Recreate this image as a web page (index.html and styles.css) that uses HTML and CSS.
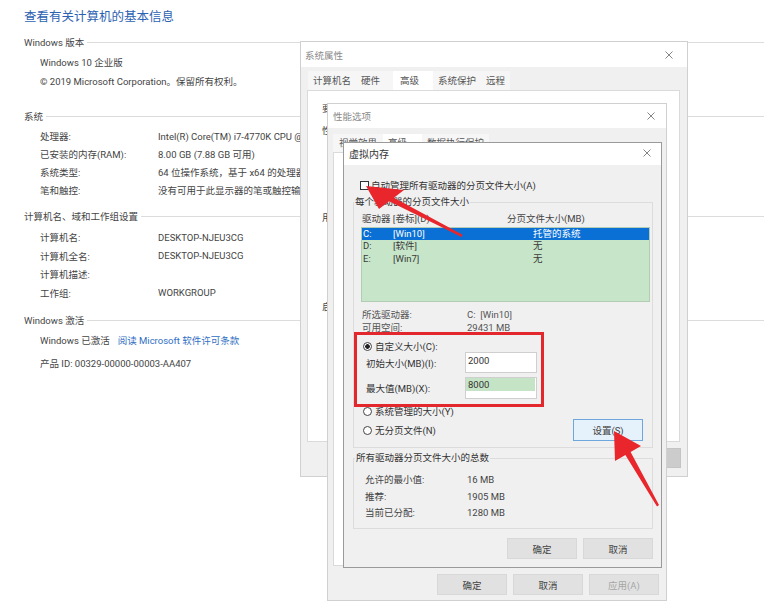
FILE: index.html
```html
<!DOCTYPE html>
<html lang="zh-CN">
<head>
<meta charset="utf-8">
<title>系统</title>
<link rel="stylesheet" href="styles.css">
</head>
<body>
<div class="screen">
  <main class="sysinfo">
    <h1 class="title">查看有关计算机的基本信息</h1>

    <section class="sec sec-ver">
      <div class="sec-head"><span>Windows 版本</span></div>
      <div class="rows">
        <div class="row">Windows 10 企业版</div>
        <div class="row">© 2019 Microsoft Corporation。保留所有权利。</div>
      </div>
    </section>

    <section class="sec sec-sys">
      <div class="sec-head"><span>系统</span></div>
      <div class="rows">
        <div class="row"><span>处理器:</span><span>Intel(R) Core(TM) i7-4770K CPU @ 3.50GHz</span></div>
        <div class="row"><span>已安装的内存(RAM):</span><span>8.00 GB (7.88 GB 可用)</span></div>
        <div class="row"><span>系统类型:</span><span>64 位操作系统，基于 x64 的处理器</span></div>
        <div class="row"><span>笔和触控:</span><span>没有可用于此显示器的笔或触控输入</span></div>
      </div>
    </section>

    <section class="sec sec-comp">
      <div class="sec-head"><span>计算机名、域和工作组设置</span></div>
      <div class="rows">
        <div class="row"><span>计算机名:</span><span>DESKTOP-NJEU3CG</span></div>
        <div class="row"><span>计算机全名:</span><span>DESKTOP-NJEU3CG</span></div>
        <div class="row"><span>计算机描述:</span><span></span></div>
        <div class="row"><span>工作组:</span><span>WORKGROUP</span></div>
      </div>
    </section>

    <section class="sec sec-act">
      <div class="sec-head"><span>Windows 激活</span></div>
      <div class="rows">
        <div class="row row-flow">Windows 已激活<a class="link">阅读 Microsoft 软件许可条款</a></div>
        <div class="row row-flow row-pid">产品 ID: 00329-00000-00003-AA407</div>
      </div>
    </section>
  </main>

  <!-- 系统属性 -->
  <div class="dlg dlg-sys">
    <div class="tbar tbar-sys">
      <span class="tbar-title muted">系统属性</span>
      <svg class="x" viewBox="0 0 8 8"><path d="M0.5 0.5L7.5 7.5M7.5 0.5L0.5 7.5"/></svg>
    </div>
    <div class="tabs tabs-sys">
      <span class="tab">计算机名</span>
      <span class="tab">硬件</span>
      <span class="tab on">高级</span>
      <span class="tab">系统保护</span>
      <span class="tab">远程</span>
    </div>
    <div class="panel panel-sys">
      <div class="pline pl1">要进行大多数更改，你必须作为管理员登录。</div>
      <div class="pline pl2">性能</div>
      <div class="pline pl3">用户配置文件</div>
      <div class="pline pl4">启动和故障恢复</div>
    </div>
    <div class="btnrow btnrow-sys">
      <span class="btn">确定</span>
      <span class="btn">取消</span>
      <span class="btn btn-dark">应用(A)</span>
    </div>
  </div>

  <!-- 性能选项 -->
  <div class="dlg dlg-perf">
    <div class="tbar tbar-perf">
      <span class="tbar-title muted">性能选项</span>
      <svg class="x" viewBox="0 0 8 8"><path d="M0.5 0.5L7.5 7.5M7.5 0.5L0.5 7.5"/></svg>
    </div>
    <div class="tabs tabs-perf">
      <span class="tab">视觉效果</span>
      <span class="tab on">高级</span>
      <span class="tab">数据执行保护</span>
    </div>
    <div class="panel panel-perf"></div>
    <div class="btnrow btnrow-perf">
      <span class="btn">确定</span>
      <span class="btn">取消</span>
      <span class="btn btn-off">应用(A)</span>
    </div>
  </div>

  <!-- 虚拟内存 -->
  <div class="dlg dlg-vm">
    <div class="tbar tbar-vm">
      <span class="tbar-title">虚拟内存</span>
      <svg class="x" viewBox="0 0 8 8"><path d="M0.5 0.5L7.5 7.5M7.5 0.5L0.5 7.5"/></svg>
    </div>
    <div class="vm-body">
      <div class="check-row"><span class="checkbox"></span><span class="check-label">自动管理所有驱动器的分页文件大小(A)</span></div>

      <fieldset class="group group-drive">
        <legend>每个驱动器的分页文件大小</legend>
        <div class="colhead"><span>驱动器 [卷标](D)</span><span>分页文件大小(MB)</span></div>
        <div class="listbox">
          <div class="li sel"><span>C:</span><span>[Win10]</span><span>托管的系统</span></div>
          <div class="li"><span>D:</span><span>[软件]</span><span>无</span></div>
          <div class="li"><span>E:</span><span>[Win7]</span><span>无</span></div>
        </div>
        <div class="info">
          <div class="info-row"><span>所选驱动器:</span><span>C:&nbsp; [Win10]</span></div>
          <div class="info-row"><span>可用空间:</span><span>29431 MB</span></div>
        </div>
        <div class="radio-row radio-custom"><span class="radio on"></span><span>自定义大小(C):</span></div>
        <div class="size-row"><span>初始大小(MB)(I):</span><span class="input"><span class="input-text">2000</span></span></div>
        <div class="size-row size-row2"><span>最大值(MB)(X):</span><span class="input"><span class="input-text input-sel">8000</span></span></div>
        <div class="radio-row radio-sys"><span class="radio"></span><span>系统管理的大小(Y)</span></div>
        <div class="radio-row radio-none"><span class="radio"></span><span>无分页文件(N)</span><span class="btn btn-set">设置(S)</span></div>
      </fieldset>

      <fieldset class="group group-total">
        <legend>所有驱动器分页文件大小的总数</legend>
        <div class="total-row"><span>允许的最小值:</span><span>16 MB</span></div>
        <div class="total-row"><span>推荐:</span><span>1905 MB</span></div>
        <div class="total-row"><span>当前已分配:</span><span>1280 MB</span></div>
      </fieldset>

      <div class="btnrow btnrow-vm">
        <span class="btn">确定</span>
        <span class="btn">取消</span>
      </div>
    </div>
  </div>

  <!-- 标注 -->
  <svg class="marks" viewBox="0 0 764 605" width="764" height="605">
    <rect x="355.5" y="333.5" width="187" height="72" fill="none" stroke="#e2282d" stroke-width="3"/>
    <polygon fill="#e8262b" points="366,186 404,190 393.9,197.7 462.6,234.8 461.6,237 389.1,201.3 379,209"/>
    <polygon fill="#e8262b" points="614,431 641,446 630.6,452 659,505 657,506.5 625.4,455 615,461"/>
  </svg>
</div>
</body>
</html>
```

FILE: styles.css
```css
* { box-sizing: border-box; }
html, body { margin: 0; padding: 0; }
body {
  width: 764px;
  height: 605px;
  overflow: hidden;
  background: #fff;
  font-family: Roboto, "Noto Sans CJK SC", sans-serif;
  font-size: 9.5px;
  color: #3c3c3c;
}
.screen { position: relative; width: 764px; height: 605px; overflow: hidden; }

/* ---------- left system info page ---------- */
.sysinfo { padding: 7px 0 0 24px; }
.title {
  margin: 0;
  font-size: 12.5px;
  font-weight: normal;
  line-height: 20px;
  color: #2d62b2;
  white-space: nowrap;
}
.sec-head {
  display: flex;
  align-items: center;
  height: 18px;
  color: #454545;
  white-space: nowrap;
}
.sec-head::after {
  content: "";
  flex: 1;
  border-top: 1px solid #dcdcdc;
  margin-left: 3px;
}
.rows { padding-left: 16px; }
.row {
  display: grid;
  grid-template-columns: 118px auto;
  align-items: center;
  height: 18px;
  white-space: nowrap;
  color: #444;
}
.row-flow { display: flex; }
.link { color: #2f6fc4; margin-left: 8px; }

.sec-ver .sec-head { margin-top: 6px; }
.sec-ver .rows { margin-top: 1.5px; }
.sec-ver .row { height: 19px; }
.sec-sys .sec-head { margin-top: 16.5px; }
.sec-sys .rows { margin-top: 2px; }
.sec-comp .sec-head { margin-top: 8px; }
.sec-comp .rows { margin-top: 3px; }
.sec-comp .row { height: 18.5px; }
.sec-act .sec-head { margin-top: 9px; }
.sec-act .rows { margin-top: 2px; }
.sec-act .row-pid { margin-top: 5px; }

/* ---------- dialogs ---------- */
.dlg {
  position: absolute;
  display: flex;
  flex-direction: column;
  background: #f0f0f0;
  border: 1px solid #d0d0d0;
}
.dlg-sys { left: 300px; top: 41px; width: 388px; height: 436px; }
.dlg-perf { left: 327px; top: 103px; width: 340px; height: 498px; }
.dlg-vm { left: 343px; top: 142px; width: 319px; height: 426px; border-color: #9a9a9a; }

.tbar {
  flex: none;
  display: flex;
  align-items: center;
  justify-content: space-between;
  background: #fff;
  white-space: nowrap;
}
.tbar-sys { height: 25px; padding: 0 14px 0 4px; }
.tbar-perf { height: 24px; padding: 0 11px 0 5px; }
.tbar-vm { height: 22px; padding: 0 10px 2px 5px; color: #333; font-size: 10px; }
.muted { color: #8a8a8a; }
.x { width: 8px; height: 8px; flex: none; }
.x path { stroke: #777; stroke-width: 0.9; fill: none; }

.tabs {
  flex: none;
  display: flex;
  align-self: flex-start;
  background: #f6f6f6;
  white-space: nowrap;
  color: #555;
}
.tab { display: block; }
.tab.on { background: #fff; }
.tabs-sys { margin: 4px 0 0 7px; height: 19px; line-height: 19px; }
.tabs-sys .tab { padding: 0 5px; }
.tabs-sys .tab.on { margin-left: 8px; padding: 0 14px 0 7px; }
.tabs-perf { margin: 6px 0 0 5px; height: 18px; line-height: 18px; }
.tabs-perf .tab { padding: 0 5px; }
.tabs-perf .tab:first-child { padding: 0 6px; }
.tabs-perf .tab.on { padding: 0 15px 0 5px; }

.panel {
  flex: none;
  background: #fff;
  border: 1px solid #dadada;
}
.panel-sys { margin: 0 7px 0 6px; height: 352px; padding-left: 14px; }
.panel-perf { margin: 0 5px; height: 414px; }
.pline { line-height: 13px; white-space: nowrap; color: #444; }
.pl1 { margin-top: 10.5px; }
.pl2 { margin-top: 9px; }
.pl3 { margin-top: 74px; }
.pl4 { margin-top: 76px; }

.btnrow { flex: none; display: flex; justify-content: flex-end; gap: 6px; }
.btn {
  display: flex;
  align-items: center;
  justify-content: center;
  width: 70px;
  background: #e1e1e1;
  border: 1px solid #d8d8d8;
  color: #444;
  white-space: nowrap;
}
.btnrow-sys { margin-top: 6px; padding-right: 6px; }
.btnrow-sys .btn { height: 20px; }
.btn-dark { background: #cccccc; border-color: #c4c4c4; }
.btnrow-perf { margin-top: 8px; padding-right: 7px; }
.btnrow-perf .btn { height: 21px; }
.btn-off { color: #a6a6a6; }

/* ---------- virtual memory ---------- */
.vm-body {
  flex: 1;
  display: flex;
  flex-direction: column;
  padding: 0 8px 0 9px;
  color: #333;
}
.check-row {
  display: flex;
  align-items: center;
  height: 14px;
  margin-top: 13px;
  padding-left: 7px;
  white-space: nowrap;
}
.checkbox {
  width: 9px;
  height: 9px;
  background: #fff;
  border: 1px solid #333;
  flex: none;
}
.check-label { margin-left: 2px; }

.group {
  margin: 3px 0 0 0;
  padding: 0;
  min-width: 0;
  border: 1px solid #dcdcdc;
}
.group legend {
  padding: 0 1px;
  line-height: 14px;
  white-space: nowrap;
  color: #333;
}
.group-drive { padding-bottom: 6px; }
.group-total { padding: 7px 0 6px 0; }
.group-total legend { margin-left: 1px; }

.colhead {
  display: grid;
  grid-template-columns: 145px auto;
  height: 13px;
  line-height: 13px;
  margin-top: 2.5px;
  padding-left: 8px;
  white-space: nowrap;
  color: #444;
}
.listbox {
  margin: 2.5px 2px 0 7px;
  height: 75px;
  background: #c7e6c9;
  border: 1px solid #b2cdb4;
}
.li {
  display: grid;
  grid-template-columns: 30px 140px auto;
  height: 12.5px;
  line-height: 12.5px;
  padding-left: 1px;
  white-space: nowrap;
  color: #3a3a3a;
}
.li.sel { height: 12px; line-height: 12px; background: #0a70d6; color: #fff; }

.info { margin-top: 6px; }
.info-row {
  display: grid;
  grid-template-columns: 105px auto;
  height: 13px;
  line-height: 13px;
  padding-left: 8px;
  white-space: nowrap;
  color: #555;
}

.radio-row {
  display: flex;
  align-items: center;
  padding-left: 9px;
  white-space: nowrap;
}
.radio-row > span:nth-child(2) { margin-left: 3px; }
.radio {
  width: 9px;
  height: 9px;
  flex: none;
  border: 1px solid #444;
  border-radius: 50%;
  background: #fff;
}
.radio.on { background: radial-gradient(circle, #222 0 2px, #fff 2.6px); }
.radio-custom { height: 12px; margin-top: 6px; }
.radio-sys { height: 12px; margin-top: 6px; }
.radio-none { height: 22px; margin-top: 2px; }
.btn-set {
  margin: 0 9px 0 auto;
  height: 22px;
  background: #e5f1fb;
  border-color: #6ea6de;
}

.size-row {
  display: grid;
  grid-template-columns: 99px 72px;
  align-items: center;
  height: 21px;
  padding-left: 12px;
  white-space: nowrap;
}
.size-row2 { height: 22px; margin-top: 4px; }
.input {
  align-self: stretch;
  background: #fff;
  border: 1px solid #cfcfcf;
  padding: 0 1px 0 0;
}
.input-text { display: block; height: 13px; line-height: 13px; padding-left: 2px; margin-top: 1px; }
.size-row2 .input-text { margin-top: 0; }
.input-sel { background: #c5e4c6; }

.total-row {
  display: grid;
  grid-template-columns: 102px auto;
  height: 16.5px;
  line-height: 16.5px;
  padding-left: 11px;
  white-space: nowrap;
  color: #444;
}

.btnrow-vm { margin-top: 9.5px; }
.btnrow-vm .btn { height: 21px; }

/* ---------- annotation overlay ---------- */
.marks { position: absolute; left: 0; top: 0; pointer-events: none; }
```
